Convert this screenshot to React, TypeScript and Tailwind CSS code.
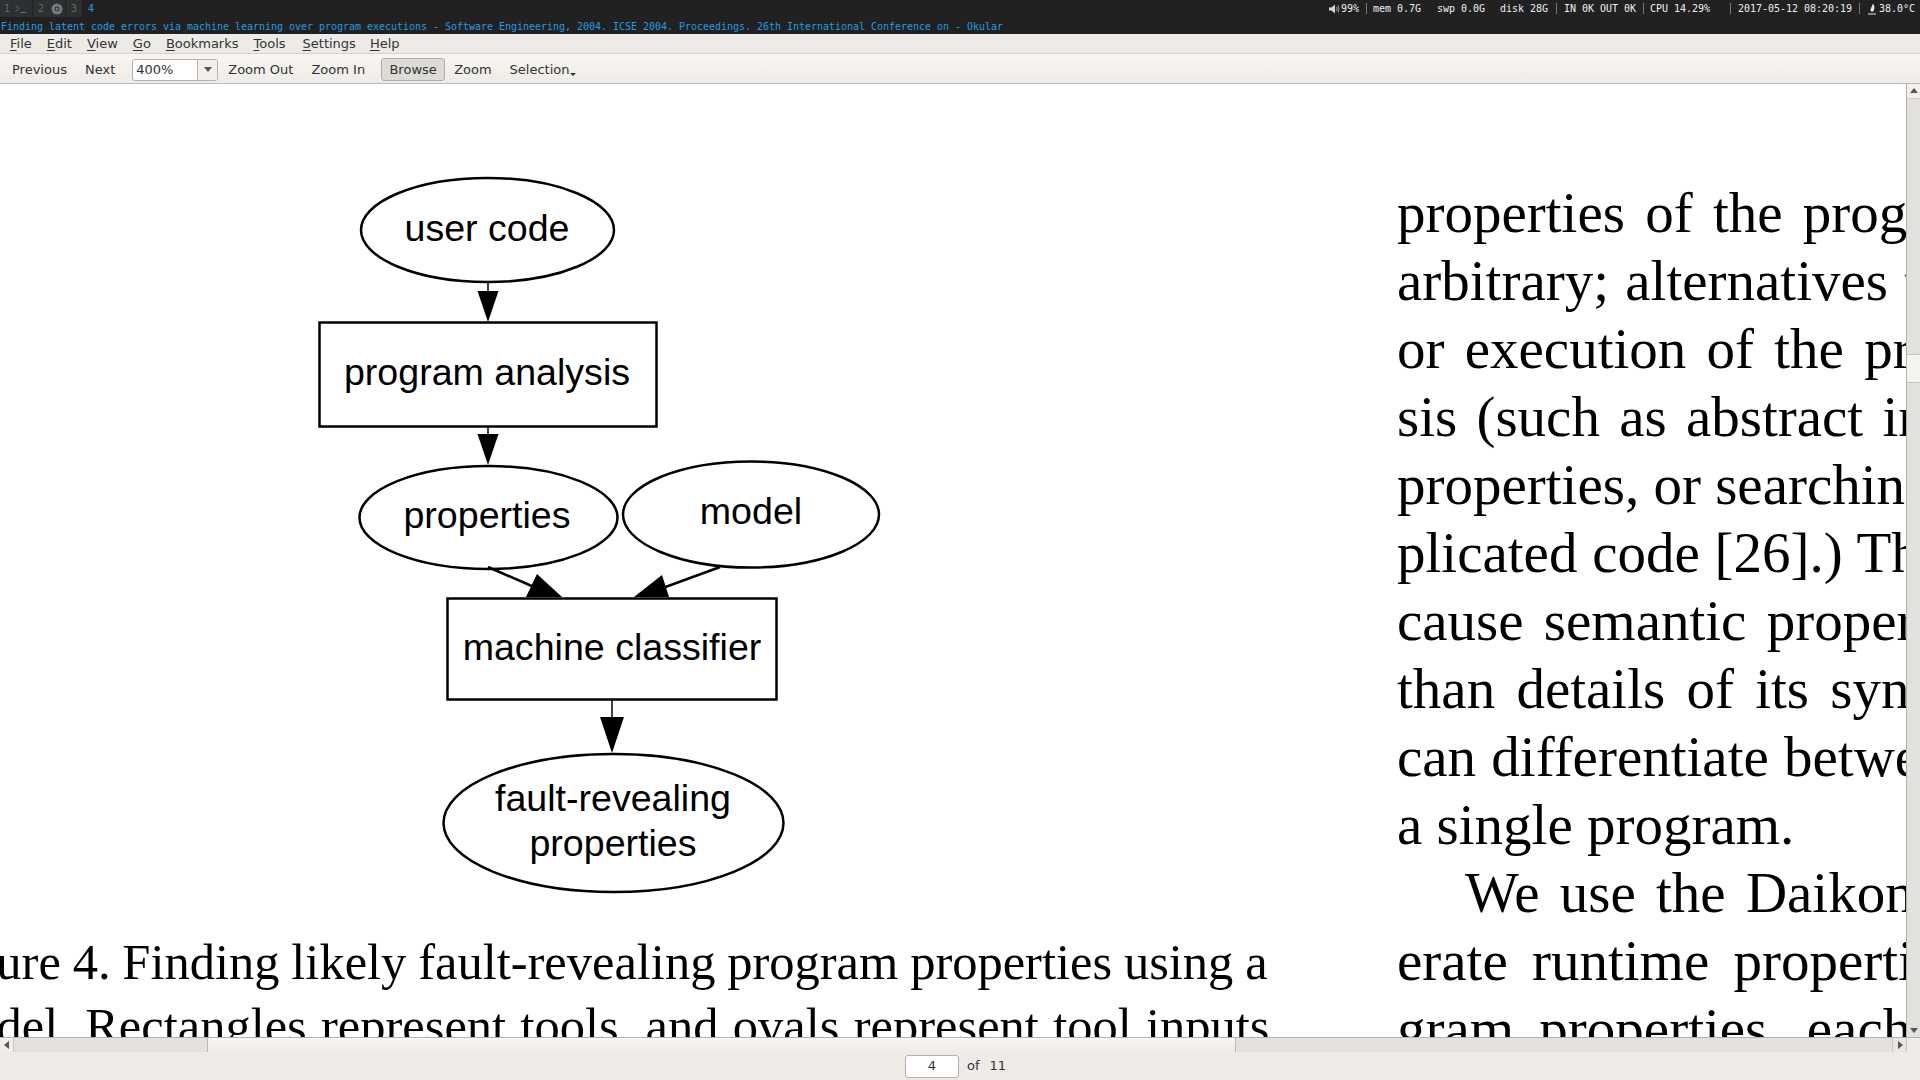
import { ReactNode } from "react";

const mono = "font-['DejaVu_Sans_Mono',monospace] text-[10px] leading-[14px] tracking-[-0.02px]";
const ui = "font-['DejaVu_Sans',sans-serif] text-[13px] text-[#2e3436]";

const menus = [
  { first: "F", rest: "ile", cls: "" },
  { first: "E", rest: "dit", cls: "" },
  { first: "V", rest: "iew", cls: "" },
  { first: "G", rest: "o", cls: "" },
  { first: "B", rest: "ookmarks", cls: "" },
  { first: "T", rest: "ools", cls: "" },
  { first: "S", rest: "ettings", cls: "ml-[2px]" },
  { first: "H", rest: "elp", cls: "ml-[-1px]" },
];

const rightLines = [
  { text: "properties of the program", cls: "[word-spacing:6px]" },
  { text: "arbitrary; alternatives to", cls: "[word-spacing:2px]" },
  { text: "or execution of the program", cls: "[word-spacing:6px]" },
  { text: "sis (such as abstract inter", cls: "[word-spacing:5px]" },
  { text: "properties, or searching", cls: "[word-spacing:0px]" },
  { text: "plicated code [26].) The", cls: "[word-spacing:0.5px]" },
  { text: "cause semantic properties", cls: "[word-spacing:6px]" },
  { text: "than details of its syntax", cls: "[word-spacing:7px]" },
  { text: "can differentiate between", cls: "[word-spacing:1px]" },
  { text: "a single program.", cls: "" },
  { text: "We use the Daikon", cls: "[word-spacing:6px] pl-[68px]" },
  { text: "erate runtime properties", cls: "[word-spacing:10px]" },
  { text: "gram properties, each", cls: "[word-spacing:11px]" },
];

const Sep = () => <span className="w-px h-[11px] bg-[#777]" />;

const Stat = ({ children, className = "" }: { children: ReactNode; className?: string }) => (
  <span className={`whitespace-pre text-[#efefef] ${className}`}>{children}</span>
);

const ToolButton = ({ children, className = "" }: { children: ReactNode; className?: string }) => (
  <span className={`whitespace-nowrap ${className}`}>{children}</span>
);

const TopBar = () => (
  <div className={`h-[34px] bg-[#212121] shrink-0 ${mono}`}>
    <div className="h-[21px] flex items-start justify-between">
      <div className="flex h-[17px] items-center text-[#62676b]">
        <span className="w-[32px] h-full bg-[#2d2f30] flex items-center pl-[4px] gap-[5px]">
          1
          <svg width="12" height="10" viewBox="0 0 12 10" fill="none" stroke="#62676b">
            <path d="M0.5 1.5 L4 4.5 L0.5 7.5" />
            <path d="M5 8.5 H11" />
          </svg>
        </span>
        <span className="w-[32px] h-full ml-[1px] bg-[#2d2f30] flex items-center pl-[5px] gap-[7px]">
          2
          <svg width="12" height="12" viewBox="0 0 12 12">
            <circle cx="6" cy="6" r="5.5" fill="#75797c" />
            <circle cx="6" cy="6" r="2.4" fill="#2d2f30" />
            <circle cx="6" cy="6" r="1.4" fill="#75797c" />
          </svg>
        </span>
        <span className="w-[16px] h-full ml-[1px] bg-[#2d2f30] flex items-center justify-center">3</span>
        <span className="ml-[6px] text-[#1b9ee2]">4</span>
      </div>
      <div className="flex items-center h-[17px] pr-[5px]">
        <svg width="11" height="10" viewBox="0 0 11 10" className="mr-[1px]">
          <path d="M0 3.5 H2.5 L6 0.5 V9.5 L2.5 6.5 H0 Z" fill="#d8d8d8" />
          <path d="M7.5 3 Q8.8 5 7.5 7 M9 1.5 Q11 5 9 8.5" stroke="#9a9a9a" fill="none" />
        </svg>
        <Stat>99%</Stat>
        <span className="ml-[7px] mr-[6px] flex items-center"><Sep /></span>
        <Stat>mem 0.7G</Stat>
        <Stat className="ml-[16px]">swp 0.0G</Stat>
        <Stat className="ml-[15px]">disk 28G</Stat>
        <span className="ml-[8px] mr-[7px] flex items-center"><Sep /></span>
        <Stat>IN 0K OUT 0K</Stat>
        <span className="ml-[7px] mr-[6px] flex items-center"><Sep /></span>
        <Stat>CPU 14.29%</Stat>
        <span className="ml-[20px] mr-[7px] flex items-center"><Sep /></span>
        <Stat>2017-05-12 08:20:19</Stat>
        <span className="ml-[7px] mr-[8px] flex items-center"><Sep /></span>
        <svg width="9" height="12" viewBox="0 0 9 12" className="mr-[2px]">
          <path d="M5 0.5 C6.5 3 7 5 5.5 8 C4.5 9 2.5 9 2.5 7 C2.5 5 4 3.5 5 0.5 Z" fill="#e8e8e8" />
          <path d="M0 11 H8" stroke="#e8e8e8" />
        </svg>
        <Stat>38.0°C</Stat>
      </div>
    </div>
    <div className="text-[#1b9ee2] whitespace-pre pl-[1px] leading-[12px]">
      Finding latent code errors via machine learning over program executions - Software Engineering, 2004. ICSE 2004. Proceedings. 26th International Conference on - Okular
    </div>
  </div>
);

const MenuBar = () => (
  <div className={`h-[20px] shrink-0 bg-[#eeebe6] border-b border-[#d5d2cd] flex items-center pl-[10px] gap-[15px] ${ui}`}>
    {menus.map((m) => (
      <span key={m.first} className={`leading-none ${m.cls}`}>
        <span className="underline underline-offset-2">{m.first}</span>
        {m.rest}
      </span>
    ))}
  </div>
);

const ToolBar = () => (
  <div className={`h-[30px] shrink-0 pt-[2px] bg-gradient-to-b from-[#f9f6f1] to-[#efece7] border-b border-[#bdbab5] flex items-center ${ui}`}>
    <ToolButton className="ml-[12px]">Previous</ToolButton>
    <ToolButton className="ml-[18px]">Next</ToolButton>
    <span className="ml-[17px] w-[86px] h-[22px] bg-white border border-[#b5b2ad] rounded-[3px] flex items-center">
      <span className="flex-1 pl-[3px]">400%</span>
      <span className="w-[20px] h-full border-l border-[#b5b2ad] bg-[#f3f0eb] rounded-r-[3px] flex items-center justify-center">
        <svg width="8" height="5" viewBox="0 0 8 5">
          <path d="M0 0 H8 L4 5 Z" fill="#555753" />
        </svg>
      </span>
    </span>
    <ToolButton className="ml-[10px]">Zoom Out</ToolButton>
    <ToolButton className="ml-[18px]">Zoom In</ToolButton>
    <span className="ml-[16px] w-[64px] h-[23px] bg-[#dedbd6] border border-[#b0ada8] rounded-[3px] flex items-center justify-center">Browse</span>
    <ToolButton className="ml-[9px]">Zoom</ToolButton>
    <ToolButton className="ml-[18px]">Selection</ToolButton>
    <svg width="6" height="3" viewBox="0 0 6 3" className="self-end mb-[7px]">
      <path d="M0 0 H6 L3 3 Z" fill="#2e3436" />
    </svg>
  </div>
);

const Diagram = () => (
  <svg
    width="1397"
    height="846"
    viewBox="0 84 1397 846"
    className="block font-['Liberation_Sans',sans-serif]"
    fill="none"
    stroke="#000"
  >
    <ellipse cx="487.5" cy="230" rx="126.5" ry="52" strokeWidth="2.5" />
    <path d="M488 282 V292" strokeWidth="1.5" />
    <path d="M477.5 291 H498.5 L488 322 Z" fill="#000" strokeWidth="0" />
    <rect x="319.5" y="322.5" width="337" height="104" strokeWidth="2.5" />
    <path d="M488 426 V435" strokeWidth="1.5" />
    <path d="M477.5 434 H498.5 L488 465 Z" fill="#000" strokeWidth="0" />
    <ellipse cx="488.5" cy="517.5" rx="129" ry="51.5" strokeWidth="2.5" />
    <ellipse cx="751" cy="514.5" rx="128" ry="53" strokeWidth="2.5" />
    <path d="M488 567 L534 587" strokeWidth="2.5" />
    <path d="M720 567 L660 589" strokeWidth="2.5" />
    <path d="M537 574 L526 597 H562 Z" fill="#000" strokeWidth="0" />
    <path d="M662 575 L669 597 H634 Z" fill="#000" strokeWidth="0" />
    <rect x="447.5" y="598.5" width="329" height="101" strokeWidth="2.5" />
    <path d="M612 700 V720" strokeWidth="1.5" />
    <path d="M600 717 H624 L612 753 Z" fill="#000" strokeWidth="0" />
    <ellipse cx="613.5" cy="823" rx="170" ry="69" strokeWidth="2.5" />
    <g fill="#000" stroke="none" fontSize="37.6" textAnchor="middle">
      <text x="487" y="241">user code</text>
      <text x="487" y="385">program analysis</text>
      <text x="487" y="528">properties</text>
      <text x="751" y="524">model</text>
      <text x="612" y="660">machine classifier</text>
      <text x="613" y="811">fault-revealing</text>
      <text x="613" y="856">properties</text>
    </g>
  </svg>
);

const PageView = () => (
  <div className="flex-1 min-w-0 overflow-hidden flex bg-white font-['Liberation_Serif',serif] text-[57px] leading-[68px] text-black whitespace-pre">
    <div className="w-[1397px] shrink-0">
      <Diagram />
      <div className="ml-[-71px] text-[50.5px] leading-[64px] [word-spacing:-0.8px]">Figure 4. Finding likely fault-revealing program properties using a</div>
      <div className="ml-[-68px] text-[50.5px] leading-[64px] [word-spacing:1.7px]">model. Rectangles represent tools, and ovals represent tool inputs</div>
    </div>
    <div className="pt-[95px]">
      {rightLines.map((l) => (
        <div key={l.text} className={l.cls}>
          {l.text}
        </div>
      ))}
    </div>
  </div>
);

const Arrow = ({ d, className = "" }: { d: string; className?: string }) => (
  <svg width="8" height="8" viewBox="0 0 8 8" className={className}>
    <path d={d} fill="#555753" />
  </svg>
);

const VScroll = () => (
  <div className="w-[14px] shrink-0 border-l border-[#b5b2ad] bg-[#e3e1dd] flex flex-col">
    <div className="h-[15px] bg-[#f4f1ec] border-b border-[#d0cdc8] flex items-center justify-center">
      <Arrow d="M0 6 H8 L4 1 Z" />
    </div>
    <div className="h-[255px]" />
    <div className="h-[29px] bg-[#f5f3ef] border-y border-[#c9c6c1]" />
    <div className="flex-1" />
    <div className="h-[14px] bg-[#e3e1dd] flex items-center justify-center">
      <Arrow d="M0 2 H8 L4 7 Z" />
    </div>
  </div>
);

const HScroll = () => (
  <div className="h-[15px] shrink-0 border-t border-[#b5b2ad] flex bg-[#e3e1dd]">
    <div className="w-[14px] border-r border-[#c9c6c1] bg-[#f2efea] flex items-center justify-center">
      <Arrow d="M6 0 V8 L1 4 Z" />
    </div>
    <div className="w-[194px] border-r border-[#bdbab5]" />
    <div className="w-[1027px] bg-gradient-to-b from-[#faf8f5] to-[#efece7]" />
    <div className="flex-1 border-l border-[#bdbab5]" />
    <div className="w-[14px] border-l border-[#c9c6c1] bg-[#e9e6e2] flex items-center justify-center">
      <Arrow d="M2 0 V8 L7 4 Z" />
    </div>
    <div className="w-[14px] border-l border-[#c9c6c1] bg-[#efece8]" />
  </div>
);

const PageBar = () => (
  <div className={`flex-1 bg-[#eeebe6] flex items-center pl-[905px] ${ui}`}>
    <span className="w-[54px] h-[23px] bg-white border border-[#b5b2ad] rounded-[3px] flex items-center justify-center">4</span>
    <span className="ml-[8px]">of</span>
    <span className="ml-[10px]">11</span>
  </div>
);

export default function App() {
  return (
    <div className="w-[1920px] h-[1080px] flex flex-col overflow-hidden">
      <TopBar />
      <MenuBar />
      <ToolBar />
      <div className="flex-1 min-h-0 flex">
        <PageView />
        <VScroll />
      </div>
      <HScroll />
      <div className="h-[28px] shrink-0 flex">
        <PageBar />
      </div>
    </div>
  );
}
